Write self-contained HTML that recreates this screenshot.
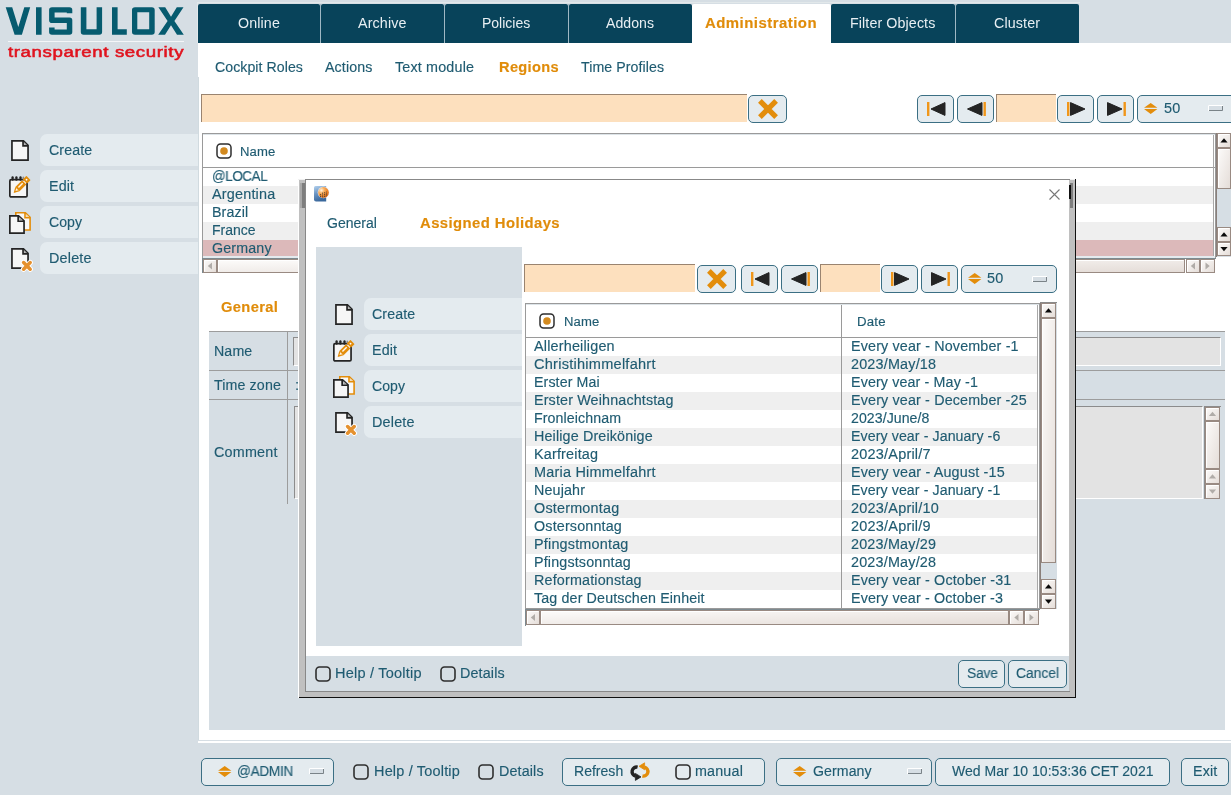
<!DOCTYPE html>
<html><head><meta charset="utf-8"><style>
html,body{margin:0;padding:0;}
body{width:1231px;height:795px;overflow:hidden;position:relative;background:#d6dee4;font-family:"Liberation Sans",sans-serif;}
div{position:absolute;}
.t{white-space:nowrap;-webkit-text-stroke:0.15px currentColor;will-change:transform;}
</style></head><body>
<svg style="position:absolute;left:0px;top:0px;" width="190" height="40" viewBox="0 0 190 40"><path d="M5.7 7.2 H12.2 L18.3 27 L24.3 7.2 H30.2 L21.9 34.8 H14.6 Z M36 7.2 H41.6 V34.8 H36 Z M52 7.2 H69.5 Q72.3 7.2 72.3 10 V13.3 H66.8 V12.5 H54.6 V17.5 H69.5 Q72.3 17.5 72.3 20.3 V32 Q72.3 34.8 69.5 34.8 H52 Q49.1 34.8 49.1 32 V27.6 H54.6 V29.5 H66.8 V23 H52 Q49.1 23 49.1 20.2 V10 Q49.1 7.2 52 7.2 Z M80.8 7.2 H86.4 V29.3 H96.6 V7.2 H102.1 V32 Q102.1 34.8 99.3 34.8 H83.6 Q80.8 34.8 80.8 32 Z M112 7.2 H117.6 V29.2 H126.8 V34.8 H112 Z M135 7.2 H151.8 Q154.7 7.2 154.7 10 V32 Q154.7 34.8 151.8 34.8 H135 Q132 34.8 132 32 V10 Q132 7.2 135 7.2 Z M137.3 12.2 V29.2 H149.2 V12.2 Z M158.4 7.2 H165.2 L171 16.8 L176.8 7.2 H183.5 L174.4 21 L183.8 34.8 H177 L171 25.2 L165 34.8 H158.2 L167.6 21 Z" fill="#065b6f" fill-rule="evenodd"/></svg>
<div style="left:8px;top:41px;width:176px;height:1px;background:#f4f6f8;"></div>
<div class="t" style="left:7.5px;top:44px;font-size:15.5px;line-height:15px;color:#e0141f;-webkit-text-stroke:0.55px #e0141f;transform:scaleX(1.205);transform-origin:0 0;letter-spacing:0.5px">transparent security</div>
<div style="left:198px;top:4px;width:122px;height:39px;background:#08435a;border-radius:2px 2px 0 0;"></div>
<div class="t" style="left:238.04px;top:16px;font-size:14.00px;line-height:14.00px;letter-spacing:0.119px;color:#e8eff3;transform:scaleX(1.0180);transform-origin:0 0;-webkit-text-stroke:0;">Online</div>
<div style="left:321px;top:4px;width:123px;height:39px;background:#08435a;border-radius:2px 2px 0 0;"></div>
<div class="t" style="left:358.19px;top:16px;font-size:14.00px;line-height:14.00px;letter-spacing:0.136px;color:#e8eff3;transform:scaleX(1.0208);transform-origin:0 0;-webkit-text-stroke:0;">Archive</div>
<div style="left:445px;top:4px;width:123px;height:39px;background:#08435a;border-radius:2px 2px 0 0;"></div>
<div class="t" style="left:482.47px;top:16px;font-size:14.00px;line-height:14.00px;letter-spacing:-0.011px;color:#e8eff3;transform:scaleX(0.9982);transform-origin:0 0;-webkit-text-stroke:0;">Policies</div>
<div style="left:569px;top:4px;width:123px;height:39px;background:#08435a;border-radius:2px 2px 0 0;"></div>
<div class="t" style="left:606.45px;top:16px;font-size:14.00px;line-height:14.00px;letter-spacing:0.052px;color:#e8eff3;transform:scaleX(1.0066);transform-origin:0 0;-webkit-text-stroke:0;">Addons</div>
<div style="left:692px;top:4px;width:139px;height:39px;background:#fff;border-radius:2px 2px 0 0;"></div>
<div class="t" style="left:705.00px;top:16px;font-size:14.00px;line-height:14.00px;letter-spacing:0.443px;color:#e08c0a;font-weight:bold;transform:scaleX(1.0669);transform-origin:0 0;">Administration</div>
<div style="left:831px;top:4px;width:124px;height:39px;background:#08435a;border-radius:2px 2px 0 0;"></div>
<div class="t" style="left:850.30px;top:16px;font-size:14.00px;line-height:14.00px;letter-spacing:0.103px;color:#e8eff3;transform:scaleX(1.0179);transform-origin:0 0;-webkit-text-stroke:0;">Filter Objects</div>
<div style="left:956px;top:4px;width:123px;height:39px;background:#08435a;border-radius:2px 2px 0 0;"></div>
<div class="t" style="left:994.44px;top:16px;font-size:14.00px;line-height:14.00px;letter-spacing:0.125px;color:#e8eff3;transform:scaleX(1.0201);transform-origin:0 0;-webkit-text-stroke:0;">Cluster</div>
<div style="left:197px;top:2px;width:883px;height:1px;background:#e2e8ea;"></div>
<div style="left:197px;top:3px;width:1px;height:40px;background:#e2e8ea;"></div>
<div style="left:320px;top:4px;width:1px;height:39px;background:#9fb8c4;"></div>
<div style="left:444px;top:4px;width:1px;height:39px;background:#9fb8c4;"></div>
<div style="left:568px;top:4px;width:1px;height:39px;background:#9fb8c4;"></div>
<div style="left:955px;top:4px;width:1px;height:39px;background:#9fb8c4;"></div>
<div style="left:199px;top:43px;width:1032px;height:697px;background:#fff;"></div>
<div style="left:198px;top:43px;width:1px;height:34px;background:#fff;"></div>
<div style="left:198px;top:77px;width:1px;height:663px;background:#d0dadf;"></div>
<div style="left:198px;top:741px;width:1033px;height:2px;background:#fff;"></div>
<div class="t" style="left:214.50px;top:60px;font-size:14.00px;line-height:14.00px;letter-spacing:0.062px;color:#1f5b71;transform:scaleX(1.0095);transform-origin:0 0;">Cockpit Roles</div>
<div class="t" style="left:324.60px;top:60px;font-size:14.00px;line-height:14.00px;letter-spacing:0.108px;color:#1f5b71;transform:scaleX(1.0168);transform-origin:0 0;">Actions</div>
<div class="t" style="left:395.00px;top:60px;font-size:14.00px;line-height:14.00px;letter-spacing:0.161px;color:#1f5b71;transform:scaleX(1.0241);transform-origin:0 0;">Text module</div>
<div class="t" style="left:498.60px;top:60px;font-size:14.00px;line-height:14.00px;letter-spacing:0.327px;color:#e08c0a;font-weight:bold;transform:scaleX(1.0432);transform-origin:0 0;">Regions</div>
<div class="t" style="left:580.60px;top:60px;font-size:14.00px;line-height:14.00px;letter-spacing:0.074px;color:#1f5b71;transform:scaleX(1.0120);transform-origin:0 0;">Time Profiles</div>
<div style="left:201px;top:94px;width:546px;height:28px;background:#fde0be;border-top:1px solid #9a8470;border-left:1px solid #9a8470;box-sizing:border-box;"></div>
<div style="left:748px;top:95px;width:39px;height:28px;background:#e4ebef;border:1.5px solid #3b6f84;border-radius:5px;box-sizing:border-box;"></div>
<svg style="position:absolute;left:758px;top:99px;" width="20" height="20" viewBox="0 0 20 20"><path d="M1.9 1.9 L18.1 18.1 M18.1 1.9 L1.9 18.1" stroke="#e38d0b" stroke-width="5.2" stroke-linecap="butt"/></svg>
<div style="left:917px;top:95px;width:37px;height:28px;background:#e4ebef;border:1.5px solid #3b6f84;border-radius:5px;box-sizing:border-box;"></div>
<svg style="position:absolute;left:927px;top:102px;" width="20" height="14" viewBox="0 0 20 14"><rect x="0" y="0" width="2.4" height="14" fill="#f0961a"/><path d="M4 7 L18 0.6 V13.4 Z" fill="#242424" stroke="#242424" stroke-width="1" stroke-linejoin="round"/></svg>
<div style="left:957px;top:95px;width:37px;height:28px;background:#e4ebef;border:1.5px solid #3b6f84;border-radius:5px;box-sizing:border-box;"></div>
<svg style="position:absolute;left:967px;top:102px;" width="20" height="14" viewBox="0 0 20 14"><path d="M0.5 7 L15 0.6 V13.4 Z" fill="#242424" stroke="#242424" stroke-width="1" stroke-linejoin="round"/><rect x="16.5" y="0" width="2.4" height="14" fill="#f0961a"/></svg>
<div style="left:996px;top:94px;width:60px;height:28px;background:#fde0be;border-top:1px solid #9a8470;border-left:1px solid #9a8470;box-sizing:border-box;"></div>
<div style="left:1057px;top:95px;width:37px;height:28px;background:#e4ebef;border:1.5px solid #3b6f84;border-radius:5px;box-sizing:border-box;"></div>
<svg style="position:absolute;left:1067px;top:102px;" width="20" height="14" viewBox="0 0 20 14"><rect x="0" y="0" width="2.4" height="14" fill="#f0961a"/><path d="M3.5 0.6 L18 7 L3.5 13.4 Z" fill="#242424" stroke="#242424" stroke-width="1" stroke-linejoin="round"/></svg>
<div style="left:1097px;top:95px;width:37px;height:28px;background:#e4ebef;border:1.5px solid #3b6f84;border-radius:5px;box-sizing:border-box;"></div>
<svg style="position:absolute;left:1107px;top:102px;" width="20" height="14" viewBox="0 0 20 14"><path d="M0.5 0.6 L15 7 L0.5 13.4 Z" fill="#242424" stroke="#242424" stroke-width="1" stroke-linejoin="round"/><rect x="16.5" y="0" width="2.4" height="14" fill="#f0961a"/></svg>
<div style="left:1137px;top:95px;width:100px;height:28px;background:#e4ebef;border:1.5px solid #3b6f84;border-radius:5px;box-sizing:border-box;"></div>
<svg style="position:absolute;left:1144px;top:103px;" width="14" height="12" viewBox="0 0 14 12"><path d="M6.7 0 L13.4 4.8 H0 Z M0 6.1 H13.4 L6.7 11 Z" fill="#e38d0b"/></svg>
<div class="t" style="left:1163.50px;top:101px;font-size:14.00px;line-height:14.00px;letter-spacing:0.233px;color:#1f5b71;transform:scaleX(1.0308);transform-origin:0 0;">50</div>
<svg style="position:absolute;left:1208px;top:105px;" width="15" height="6" viewBox="0 0 15 6"><rect x="0" y="0" width="15" height="6" fill="#d6dee4"/><path d="M0.5 6 V0.5 H15" fill="none" stroke="#fff" stroke-width="1"/><path d="M1 5.5 H14.5 V1" fill="none" stroke="#7a8388" stroke-width="1"/></svg>
<div style="left:202px;top:133px;width:1014px;height:126px;border:1px solid #9a9a9a;box-sizing:border-box;background:#fff;"></div>
<div style="left:203px;top:134px;width:1012px;height:1px;background:#dde4e8;"></div>
<svg style="position:absolute;left:216px;top:143px;" width="16" height="16" viewBox="0 0 16 16"><rect x="1" y="1" width="14" height="14" rx="3.5" fill="#fff" stroke="#2e2e2e" stroke-width="1.5"/><circle cx="8" cy="8" r="3.8" fill="#d38a1f"/></svg>
<div class="t" style="left:240.00px;top:146px;font-size:12.92px;line-height:12.92px;letter-spacing:0.115px;color:#1f5b71;transform:scaleX(1.0135);transform-origin:0 0;">Name</div>
<div style="left:203px;top:167px;width:1012px;height:1px;background:#9a9a9a;"></div>
<div style="left:1213px;top:135px;width:1px;height:121px;background:#a8a8a8;"></div>
<div class="t" style="left:211.60px;top:169px;font-size:14.00px;line-height:14.00px;letter-spacing:-0.424px;color:#1f5b71;transform:scaleX(0.9594);transform-origin:0 0;">@LOCAL</div>
<div style="left:203px;top:186px;width:1010px;height:18px;background:#efefef;"></div>
<div class="t" style="left:211.60px;top:187px;font-size:14.00px;line-height:14.00px;letter-spacing:0.187px;color:#1f5b71;transform:scaleX(1.0289);transform-origin:0 0;">Argentina</div>
<div class="t" style="left:211.60px;top:205px;font-size:14.00px;line-height:14.00px;letter-spacing:0.104px;color:#1f5b71;transform:scaleX(1.0182);transform-origin:0 0;">Brazil</div>
<div style="left:203px;top:222px;width:1010px;height:18px;background:#efefef;"></div>
<div class="t" style="left:211.60px;top:223px;font-size:14.00px;line-height:14.00px;letter-spacing:-0.029px;color:#1f5b71;transform:scaleX(0.9960);transform-origin:0 0;">France</div>
<div style="left:203px;top:240px;width:1010px;height:16px;background:#dcb9ba;"></div>
<div class="t" style="left:211.60px;top:241px;font-size:14.00px;line-height:14.00px;letter-spacing:0.152px;color:#1f5b71;transform:scaleX(1.0188);transform-origin:0 0;">Germany</div>
<div style="left:203px;top:256px;width:1012px;height:2px;background:#e4eaee;"></div>
<div style="left:1216px;top:133px;width:15px;height:124px;background:#d6dee4;"></div>
<div style="left:1216px;top:133px;width:1px;height:124px;background:#8a7f7a;"></div>
<svg style="position:absolute;left:1217px;top:133px;" width="14" height="15" viewBox="0 0 14 15"><defs><linearGradient id="g12170_1330" x1="0" y1="0" x2="1" y2="1"><stop offset="0" stop-color="#fdfcfb"/><stop offset="1" stop-color="#e4dcd7"/></linearGradient></defs><rect x="0.5" y="0.5" width="13" height="14" fill="url(#g12170_1330)" stroke="#998a82" stroke-width="1"/><path d="M1.5 13.5 V1.5 H12.5" fill="none" stroke="#fff" stroke-width="1"/><path d="M3.4 9.5 L7.0 5.3 L10.6 9.5 Z" fill="#0a0a0a"/></svg>
<svg style="position:absolute;left:1217px;top:148px;" width="14" height="41" viewBox="0 0 14 41"><defs><linearGradient id="g12170_1480" x1="0" y1="0" x2="1" y2="1"><stop offset="0" stop-color="#fdfcfb"/><stop offset="1" stop-color="#e4dcd7"/></linearGradient></defs><rect x="0.5" y="0.5" width="13" height="40" fill="url(#g12170_1480)" stroke="#998a82" stroke-width="1"/><path d="M1.5 39.5 V1.5 H12.5" fill="none" stroke="#fff" stroke-width="1"/></svg>
<svg style="position:absolute;left:1217px;top:227px;" width="14" height="15" viewBox="0 0 14 15"><defs><linearGradient id="g12170_2270" x1="0" y1="0" x2="1" y2="1"><stop offset="0" stop-color="#fdfcfb"/><stop offset="1" stop-color="#e4dcd7"/></linearGradient></defs><rect x="0.5" y="0.5" width="13" height="14" fill="url(#g12170_2270)" stroke="#998a82" stroke-width="1"/><path d="M1.5 13.5 V1.5 H12.5" fill="none" stroke="#fff" stroke-width="1"/><path d="M3.4 9.5 L7.0 5.3 L10.6 9.5 Z" fill="#0a0a0a"/></svg>
<svg style="position:absolute;left:1217px;top:242px;" width="14" height="14" viewBox="0 0 14 14"><defs><linearGradient id="g12170_2420" x1="0" y1="0" x2="1" y2="1"><stop offset="0" stop-color="#fdfcfb"/><stop offset="1" stop-color="#e4dcd7"/></linearGradient></defs><rect x="0.5" y="0.5" width="13" height="13" fill="url(#g12170_2420)" stroke="#998a82" stroke-width="1"/><path d="M1.5 12.5 V1.5 H12.5" fill="none" stroke="#fff" stroke-width="1"/><path d="M3.4 5.0 L7.0 9.2 L10.6 5.0 Z" fill="#0a0a0a"/></svg>
<div style="left:202px;top:258px;width:1014px;height:1px;background:#7d8a90;"></div>
<div style="left:202px;top:258px;width:1px;height:15px;background:#7d8a90;"></div>
<svg style="position:absolute;left:203px;top:259px;" width="14" height="14" viewBox="0 0 14 14"><defs><linearGradient id="g2030_2590" x1="0" y1="0" x2="1" y2="1"><stop offset="0" stop-color="#fdfcfb"/><stop offset="1" stop-color="#e4dcd7"/></linearGradient></defs><rect x="0.5" y="0.5" width="13" height="13" fill="url(#g2030_2590)" stroke="#998a82" stroke-width="1"/><path d="M1.5 12.5 V1.5 H12.5" fill="none" stroke="#fff" stroke-width="1"/><path d="M9.0 3.4 L4.8 7.0 L9.0 10.6 Z" fill="#b0aca8"/></svg>
<svg style="position:absolute;left:217px;top:259px;" width="968" height="14" viewBox="0 0 968 14"><defs><linearGradient id="g2170_2590" x1="0" y1="0" x2="1" y2="1"><stop offset="0" stop-color="#fdfcfb"/><stop offset="1" stop-color="#e4dcd7"/></linearGradient></defs><rect x="0.5" y="0.5" width="967" height="13" fill="url(#g2170_2590)" stroke="#998a82" stroke-width="1"/><path d="M1.5 12.5 V1.5 H966.5" fill="none" stroke="#fff" stroke-width="1"/></svg>
<svg style="position:absolute;left:1186px;top:259px;" width="14" height="14" viewBox="0 0 14 14"><defs><linearGradient id="g11860_2590" x1="0" y1="0" x2="1" y2="1"><stop offset="0" stop-color="#fdfcfb"/><stop offset="1" stop-color="#e4dcd7"/></linearGradient></defs><rect x="0.5" y="0.5" width="13" height="13" fill="url(#g11860_2590)" stroke="#998a82" stroke-width="1"/><path d="M1.5 12.5 V1.5 H12.5" fill="none" stroke="#fff" stroke-width="1"/><path d="M9.0 3.4 L4.8 7.0 L9.0 10.6 Z" fill="#b0aca8"/></svg>
<svg style="position:absolute;left:1200px;top:259px;" width="15" height="14" viewBox="0 0 15 14"><defs><linearGradient id="g12000_2590" x1="0" y1="0" x2="1" y2="1"><stop offset="0" stop-color="#fdfcfb"/><stop offset="1" stop-color="#e4dcd7"/></linearGradient></defs><rect x="0.5" y="0.5" width="14" height="13" fill="url(#g12000_2590)" stroke="#998a82" stroke-width="1"/><path d="M1.5 12.5 V1.5 H13.5" fill="none" stroke="#fff" stroke-width="1"/><path d="M5.5 3.4 L9.7 7.0 L5.5 10.6 Z" fill="#b0aca8"/></svg>
<div style="left:40px;top:134px;width:158px;height:32px;background:#e4ebef;border-radius:7px 0 0 7px;"></div>
<div class="t" style="left:48.50px;top:143px;font-size:14.00px;line-height:14.00px;letter-spacing:0.097px;color:#1f5b71;transform:scaleX(1.0141);transform-origin:0 0;">Create</div>
<div style="left:40px;top:170px;width:158px;height:32px;background:#e4ebef;border-radius:7px 0 0 7px;"></div>
<div class="t" style="left:48.50px;top:179px;font-size:14.00px;line-height:14.00px;letter-spacing:0.128px;color:#1f5b71;transform:scaleX(1.0217);transform-origin:0 0;">Edit</div>
<div style="left:40px;top:206px;width:158px;height:32px;background:#e4ebef;border-radius:7px 0 0 7px;"></div>
<div class="t" style="left:48.50px;top:215px;font-size:14.00px;line-height:14.00px;letter-spacing:0.036px;color:#1f5b71;transform:scaleX(1.0044);transform-origin:0 0;">Copy</div>
<div style="left:40px;top:242px;width:158px;height:32px;background:#e4ebef;border-radius:7px 0 0 7px;"></div>
<div class="t" style="left:48.50px;top:251px;font-size:14.00px;line-height:14.00px;letter-spacing:0.183px;color:#1f5b71;transform:scaleX(1.0278);transform-origin:0 0;">Delete</div>
<svg style="position:absolute;left:11px;top:140px;" width="19" height="22" viewBox="0 0 19 22"><path d="M0.95 0.85 H12.450000000000001 L17.05 5.449999999999999 V20.15 H0.95 Z" fill="#f6f6f6" stroke="#242424" stroke-width="1.7" stroke-linejoin="miter"/><path d="M13.250000000000002 2.05 L16.150000000000002 5.1499999999999995 H13.250000000000002 Z" fill="#a8a8a8"/><path d="M12.05 0.85 V5.85 H17.05" fill="none" stroke="#242424" stroke-width="1.7"/></svg>
<svg style="position:absolute;left:9px;top:176px;" width="24" height="23" viewBox="0 0 24 23"><rect x="0.85" y="3.65" width="17.2" height="17.3" rx="1.3" fill="#f6f6f6" stroke="#242424" stroke-width="1.7"/><rect x="2.5" y="0.2" width="2.2" height="4.6" rx="1" fill="#242424"/><rect x="6.3" y="0.2" width="2.2" height="4.6" rx="1" fill="#242424"/><rect x="10.4" y="0.2" width="2.2" height="4.6" rx="1" fill="#242424"/><rect x="13.6" y="0.6" width="1.4" height="3" rx="0.7" fill="#888"/><g transform="translate(4.6 16.9) rotate(-45)"><path d="M0 0 L5.4 -3 V3 Z" fill="#e38d0b"/><path d="M2.6 0 L5.4 -1.5 V1.5 Z" fill="#fdf3e4"/><rect x="5.4" y="-3" width="9.6" height="6" fill="#e38d0b"/><rect x="7.2" y="-1.1" width="6" height="1.5" fill="#fff6ea"/><rect x="15.9" y="-3" width="5.2" height="6" rx="0.6" fill="#e38d0b"/><circle cx="18.5" cy="-0.2" r="0.9" fill="#fff"/></g></svg>
<svg style="position:absolute;left:9px;top:211px;" width="24" height="25" viewBox="0 0 24 25"><path d="M6.8 1.8 H16.4 L21.099999999999998 6.3 V19.0 H6.8 Z" fill="#f8f8f8" stroke="#e38d0b" stroke-width="1.6" stroke-linejoin="miter"/><path d="M17.2 3.0 L20.2 6.0 H17.2 Z" fill="#f0d8b0"/><path d="M15.999999999999998 1.8 V6.7 H21.099999999999998" fill="none" stroke="#e38d0b" stroke-width="1.6"/><rect x="0" y="7" width="16" height="20" fill="none"/><path d="M0.85 4.85 H9.55 L15.05 9.85 V22.15 H0.85 Z" fill="#f6f6f6" stroke="#242424" stroke-width="1.7" stroke-linejoin="miter"/><path d="M10.350000000000001 6.05 L14.15 9.549999999999999 H10.350000000000001 Z" fill="#a8a8a8"/><path d="M9.15 4.85 V10.25 H15.05" fill="none" stroke="#242424" stroke-width="1.7"/></svg>
<svg style="position:absolute;left:11px;top:248px;" width="22" height="24" viewBox="0 0 22 24"><path d="M0.95 0.85 H12.450000000000001 L17.05 5.449999999999999 V20.15 H0.95 Z" fill="#f6f6f6" stroke="#242424" stroke-width="1.7" stroke-linejoin="miter"/><path d="M13.250000000000002 2.05 L16.150000000000002 5.1499999999999995 H13.250000000000002 Z" fill="#a8a8a8"/><path d="M12.05 0.85 V5.85 H17.05" fill="none" stroke="#242424" stroke-width="1.7"/><path d="M12.6 14.6 L19.2 21.2 M19.2 14.6 L12.6 21.2" stroke="#fff" stroke-width="5.4" stroke-linecap="round"/><path d="M12.6 14.6 L19.2 21.2 M19.2 14.6 L12.6 21.2" stroke="#e5912f" stroke-width="3.5" stroke-linecap="round"/></svg>
<div class="t" style="left:220.50px;top:300px;font-size:14.00px;line-height:14.00px;letter-spacing:0.352px;color:#e08c0a;font-weight:bold;transform:scaleX(1.0495);transform-origin:0 0;">General</div>
<div style="left:209px;top:331px;width:1016px;height:399px;background:#d6dee4;"></div>
<div style="left:209px;top:331px;width:1016px;height:1px;background:#9c9c9c;"></div>
<div style="left:209px;top:370px;width:1016px;height:1px;background:#9c9c9c;"></div>
<div style="left:209px;top:399px;width:1016px;height:1px;background:#9c9c9c;"></div>
<div style="left:287px;top:332px;width:1px;height:172px;background:#9c9c9c;"></div>
<div class="t" style="left:214.40px;top:344px;font-size:14.00px;line-height:14.00px;letter-spacing:0.123px;color:#1f5b71;transform:scaleX(1.0134);transform-origin:0 0;">Name</div>
<div class="t" style="left:214.40px;top:378px;font-size:14.00px;line-height:14.00px;letter-spacing:0.115px;color:#1f5b71;transform:scaleX(1.0162);transform-origin:0 0;">Time zone</div>
<div class="t" style="left:214.40px;top:445px;font-size:14.00px;line-height:14.00px;letter-spacing:0.209px;color:#1f5b71;transform:scaleX(1.0247);transform-origin:0 0;">Comment</div>
<div style="left:293px;top:337px;width:928px;height:29px;background:#e3e3e3;border-top:1px solid #8c8c8c;border-left:1px solid #8c8c8c;border-right:1px solid #fff;border-bottom:1px solid #fff;box-sizing:border-box;"></div>
<div class="t" style="left:295.00px;top:378px;font-size:14.00px;line-height:14.00px;letter-spacing:0.229px;color:#1f5b71;transform:scaleX(1.0624);transform-origin:0 0;">:</div>
<div style="left:294px;top:406px;width:909px;height:93px;background:#e3e3e3;border-top:1px solid #8c8c8c;border-left:1px solid #8c8c8c;border-right:1px solid #fff;border-bottom:1px solid #fff;box-sizing:border-box;"></div>
<div style="left:1204px;top:406px;width:1px;height:93px;background:#8c8c8c;"></div>
<div style="left:1204px;top:406px;width:17px;height:1px;background:#8c8c8c;"></div>
<svg style="position:absolute;left:1205px;top:407px;" width="15" height="14" viewBox="0 0 15 14"><defs><linearGradient id="g12050_4070" x1="0" y1="0" x2="1" y2="1"><stop offset="0" stop-color="#fdfcfb"/><stop offset="1" stop-color="#e4dcd7"/></linearGradient></defs><rect x="0.5" y="0.5" width="14" height="13" fill="url(#g12050_4070)" stroke="#998a82" stroke-width="1"/><path d="M1.5 12.5 V1.5 H13.5" fill="none" stroke="#fff" stroke-width="1"/><path d="M3.9 9.0 L7.5 4.8 L11.1 9.0 Z" fill="#b0aca8"/></svg>
<svg style="position:absolute;left:1205px;top:421px;" width="15" height="48" viewBox="0 0 15 48"><defs><linearGradient id="g12050_4210" x1="0" y1="0" x2="1" y2="1"><stop offset="0" stop-color="#fdfcfb"/><stop offset="1" stop-color="#e4dcd7"/></linearGradient></defs><rect x="0.5" y="0.5" width="14" height="47" fill="url(#g12050_4210)" stroke="#998a82" stroke-width="1"/><path d="M1.5 46.5 V1.5 H13.5" fill="none" stroke="#fff" stroke-width="1"/></svg>
<svg style="position:absolute;left:1205px;top:469px;" width="15" height="15" viewBox="0 0 15 15"><defs><linearGradient id="g12050_4690" x1="0" y1="0" x2="1" y2="1"><stop offset="0" stop-color="#fdfcfb"/><stop offset="1" stop-color="#e4dcd7"/></linearGradient></defs><rect x="0.5" y="0.5" width="14" height="14" fill="url(#g12050_4690)" stroke="#998a82" stroke-width="1"/><path d="M1.5 13.5 V1.5 H13.5" fill="none" stroke="#fff" stroke-width="1"/><path d="M3.9 9.5 L7.5 5.3 L11.1 9.5 Z" fill="#b0aca8"/></svg>
<svg style="position:absolute;left:1205px;top:484px;" width="15" height="15" viewBox="0 0 15 15"><defs><linearGradient id="g12050_4840" x1="0" y1="0" x2="1" y2="1"><stop offset="0" stop-color="#fdfcfb"/><stop offset="1" stop-color="#e4dcd7"/></linearGradient></defs><rect x="0.5" y="0.5" width="14" height="14" fill="url(#g12050_4840)" stroke="#998a82" stroke-width="1"/><path d="M1.5 13.5 V1.5 H13.5" fill="none" stroke="#fff" stroke-width="1"/><path d="M3.9 5.5 L7.5 9.7 L11.1 5.5 Z" fill="#b0aca8"/></svg>
<div style="left:201px;top:758px;width:133px;height:28px;background:#e4ebef;border:1.5px solid #3b6f84;border-radius:5px;box-sizing:border-box;"></div>
<svg style="position:absolute;left:218px;top:766px;" width="14" height="12" viewBox="0 0 14 12"><path d="M6.7 0 L13.4 4.8 H0 Z M0 6.1 H13.4 L6.7 11 Z" fill="#e38d0b"/></svg>
<div class="t" style="left:237.40px;top:764px;font-size:14.00px;line-height:14.00px;letter-spacing:-0.285px;color:#1f5b71;transform:scaleX(0.9720);transform-origin:0 0;">@ADMIN</div>
<svg style="position:absolute;left:309px;top:768px;" width="15" height="6" viewBox="0 0 15 6"><rect x="0" y="0" width="15" height="6" fill="#d6dee4"/><path d="M0.5 6 V0.5 H15" fill="none" stroke="#fff" stroke-width="1"/><path d="M1 5.5 H14.5 V1" fill="none" stroke="#7a8388" stroke-width="1"/></svg>
<svg style="position:absolute;left:352.5px;top:763.5px;" width="16" height="16" viewBox="0 0 16 16"><rect x="1" y="1" width="14" height="14" rx="3.5" fill="none" stroke="#2e2e2e" stroke-width="1.6"/></svg>
<div class="t" style="left:373.60px;top:764px;font-size:14.00px;line-height:14.00px;letter-spacing:0.184px;color:#1f5b71;transform:scaleX(1.0330);transform-origin:0 0;">Help / Tooltip</div>
<svg style="position:absolute;left:477.5px;top:763.5px;" width="16" height="16" viewBox="0 0 16 16"><rect x="1" y="1" width="14" height="14" rx="3.5" fill="none" stroke="#2e2e2e" stroke-width="1.6"/></svg>
<div class="t" style="left:498.70px;top:764px;font-size:14.00px;line-height:14.00px;letter-spacing:0.133px;color:#1f5b71;transform:scaleX(1.0223);transform-origin:0 0;">Details</div>
<div style="left:562px;top:758px;width:203px;height:28px;background:#e4ebef;border:1.5px solid #3b6f84;border-radius:5px;box-sizing:border-box;"></div>
<div class="t" style="left:574.30px;top:764px;font-size:14.00px;line-height:14.00px;letter-spacing:0.013px;color:#1f5b71;transform:scaleX(1.0019);transform-origin:0 0;">Refresh</div>
<svg style="position:absolute;left:628px;top:762px;" width="24" height="20" viewBox="0 0 24 20"><path d="M9.6 5.2 A4.5 4.5 0 1 0 7.6 14" fill="none" stroke="#242424" stroke-width="3.4"/><path d="M7.4 11.4 L13 14.9 L7.4 18.4 Z" fill="#242424" stroke="#242424" stroke-width="0.8" stroke-linejoin="round"/><g transform="rotate(180 12 9.6)"><path d="M9.6 5.2 A4.5 4.5 0 1 0 7.6 14" fill="none" stroke="#e38d0b" stroke-width="3.4"/><path d="M7.4 11.4 L13 14.9 L7.4 18.4 Z" fill="#e38d0b" stroke="#e38d0b" stroke-width="0.8" stroke-linejoin="round"/></g></svg>
<svg style="position:absolute;left:674.5px;top:763.5px;" width="16" height="16" viewBox="0 0 16 16"><rect x="1" y="1" width="14" height="14" rx="3.5" fill="none" stroke="#2e2e2e" stroke-width="1.6"/></svg>
<div class="t" style="left:695.30px;top:764px;font-size:14.00px;line-height:14.00px;letter-spacing:0.170px;color:#1f5b71;transform:scaleX(1.0227);transform-origin:0 0;">manual</div>
<div style="left:776px;top:758px;width:156px;height:28px;background:#e4ebef;border:1.5px solid #3b6f84;border-radius:5px;box-sizing:border-box;"></div>
<svg style="position:absolute;left:793px;top:766px;" width="14" height="12" viewBox="0 0 14 12"><path d="M6.7 0 L13.4 4.8 H0 Z M0 6.1 H13.4 L6.7 11 Z" fill="#e38d0b"/></svg>
<div class="t" style="left:812.60px;top:764px;font-size:14.00px;line-height:14.00px;letter-spacing:0.080px;color:#1f5b71;transform:scaleX(1.0098);transform-origin:0 0;">Germany</div>
<svg style="position:absolute;left:907px;top:768px;" width="15" height="6" viewBox="0 0 15 6"><rect x="0" y="0" width="15" height="6" fill="#d6dee4"/><path d="M0.5 6 V0.5 H15" fill="none" stroke="#fff" stroke-width="1"/><path d="M1 5.5 H14.5 V1" fill="none" stroke="#7a8388" stroke-width="1"/></svg>
<div style="left:935px;top:758px;width:235px;height:28px;background:#e4ebef;border:1.5px solid #3b6f84;border-radius:5px;box-sizing:border-box;"></div>
<div class="t" style="left:952.00px;top:764px;font-size:14.00px;line-height:14.00px;letter-spacing:0.008px;color:#1f5b71;transform:scaleX(1.0012);transform-origin:0 0;">Wed Mar 10 10:53:36 CET 2021</div>
<div style="left:1181px;top:758px;width:48px;height:28px;background:#e4ebef;border:1.5px solid #3b6f84;border-radius:5px;box-sizing:border-box;"></div>
<div class="t" style="left:1193.30px;top:764px;font-size:14.00px;line-height:14.00px;letter-spacing:0.130px;color:#1f5b71;transform:scaleX(1.0227);transform-origin:0 0;">Exit</div>
<div style="left:299px;top:179px;width:777px;height:519px;background:#c0c0c0;"></div>
<div style="left:298px;top:179px;width:1px;height:519px;background:#fff;"></div>
<div style="left:298px;top:179px;width:778px;height:1px;background:#f0f0f0;"></div>
<div style="left:1075px;top:179px;width:1px;height:519px;background:#111;"></div>
<div style="left:299px;top:697px;width:777px;height:1px;background:#111;"></div>
<div style="left:305px;top:179px;width:1px;height:512px;background:#888;"></div>
<div style="left:305px;top:179px;width:765px;height:1px;background:#888;"></div>
<div style="left:300px;top:183px;width:2px;height:25px;background:#a8a8a8;"></div>
<div style="left:302px;top:183px;width:3px;height:25px;background:#7e7e7e;"></div>
<div style="left:1070px;top:183px;width:3px;height:25px;background:#7e7e7e;"></div>
<div style="left:1069px;top:185px;width:2px;height:14px;background:#111;"></div>
<div style="left:306px;top:180px;width:763px;height:511px;background:#fff;"></div>
<svg style="position:absolute;left:313px;top:185px;" width="18" height="18" viewBox="0 0 18 18"><defs><linearGradient id="dib" x1="0" y1="0" x2="0.3" y2="1"><stop offset="0" stop-color="#b4d2ee"/><stop offset="0.5" stop-color="#6b94c2"/><stop offset="1" stop-color="#3a689c"/></linearGradient><radialGradient id="dio" cx="0.3" cy="0.3" r="0.8"><stop offset="0" stop-color="#fff4e0"/><stop offset="0.35" stop-color="#f9b060"/><stop offset="0.8" stop-color="#ea7a1c"/><stop offset="1" stop-color="#c85a10"/></radialGradient></defs><path d="M1 2.5 Q1 1 2.5 1 H13.2 V16.6 H3 Q1 16.6 1 14.6 Z" fill="url(#dib)"/><circle cx="10.5" cy="7.4" r="5.9" fill="#e8f0f8" opacity="0.8"/><circle cx="10.5" cy="7.4" r="5.3" fill="url(#dio)"/><path d="M7.6 12 V8.5 M9.6 12.4 V7.5 M11.6 12 V7 M13.4 10.5 V6.5" stroke="#4a3a30" stroke-width="0.9" stroke-dasharray="1.2 0.6"/></svg>
<svg style="position:absolute;left:1049px;top:189px;" width="11" height="11" viewBox="0 0 11 11"><path d="M0.5 0.5 L10.5 10.5 M10.5 0.5 L0.5 10.5" stroke="#777" stroke-width="1.1"/></svg>
<div class="t" style="left:327.00px;top:216px;font-size:14.00px;line-height:14.00px;letter-spacing:0.014px;color:#1f5b71;transform:scaleX(1.0020);transform-origin:0 0;">General</div>
<div class="t" style="left:419.70px;top:216px;font-size:14.00px;line-height:14.00px;letter-spacing:0.410px;color:#e08c0a;font-weight:bold;transform:scaleX(1.0589);transform-origin:0 0;">Assigned Holidays</div>
<div style="left:316px;top:247px;width:206px;height:399px;background:#d6dee4;"></div>
<div style="left:364px;top:298px;width:158px;height:32px;background:#e4ebef;border-radius:7px 0 0 7px;"></div>
<div class="t" style="left:372.40px;top:307px;font-size:14.00px;line-height:14.00px;letter-spacing:0.097px;color:#1f5b71;transform:scaleX(1.0141);transform-origin:0 0;">Create</div>
<div style="left:364px;top:334px;width:158px;height:32px;background:#e4ebef;border-radius:7px 0 0 7px;"></div>
<div class="t" style="left:372.40px;top:343px;font-size:14.00px;line-height:14.00px;letter-spacing:0.128px;color:#1f5b71;transform:scaleX(1.0217);transform-origin:0 0;">Edit</div>
<div style="left:364px;top:370px;width:158px;height:32px;background:#e4ebef;border-radius:7px 0 0 7px;"></div>
<div class="t" style="left:372.40px;top:379px;font-size:14.00px;line-height:14.00px;letter-spacing:0.036px;color:#1f5b71;transform:scaleX(1.0044);transform-origin:0 0;">Copy</div>
<div style="left:364px;top:406px;width:158px;height:32px;background:#e4ebef;border-radius:7px 0 0 7px;"></div>
<div class="t" style="left:372.40px;top:415px;font-size:14.00px;line-height:14.00px;letter-spacing:0.183px;color:#1f5b71;transform:scaleX(1.0278);transform-origin:0 0;">Delete</div>
<svg style="position:absolute;left:335px;top:304px;" width="19" height="22" viewBox="0 0 19 22"><path d="M0.95 0.85 H12.450000000000001 L17.05 5.449999999999999 V20.15 H0.95 Z" fill="#f6f6f6" stroke="#242424" stroke-width="1.7" stroke-linejoin="miter"/><path d="M13.250000000000002 2.05 L16.150000000000002 5.1499999999999995 H13.250000000000002 Z" fill="#a8a8a8"/><path d="M12.05 0.85 V5.85 H17.05" fill="none" stroke="#242424" stroke-width="1.7"/></svg>
<svg style="position:absolute;left:333px;top:340px;" width="24" height="23" viewBox="0 0 24 23"><rect x="0.85" y="3.65" width="17.2" height="17.3" rx="1.3" fill="#f6f6f6" stroke="#242424" stroke-width="1.7"/><rect x="2.5" y="0.2" width="2.2" height="4.6" rx="1" fill="#242424"/><rect x="6.3" y="0.2" width="2.2" height="4.6" rx="1" fill="#242424"/><rect x="10.4" y="0.2" width="2.2" height="4.6" rx="1" fill="#242424"/><rect x="13.6" y="0.6" width="1.4" height="3" rx="0.7" fill="#888"/><g transform="translate(4.6 16.9) rotate(-45)"><path d="M0 0 L5.4 -3 V3 Z" fill="#e38d0b"/><path d="M2.6 0 L5.4 -1.5 V1.5 Z" fill="#fdf3e4"/><rect x="5.4" y="-3" width="9.6" height="6" fill="#e38d0b"/><rect x="7.2" y="-1.1" width="6" height="1.5" fill="#fff6ea"/><rect x="15.9" y="-3" width="5.2" height="6" rx="0.6" fill="#e38d0b"/><circle cx="18.5" cy="-0.2" r="0.9" fill="#fff"/></g></svg>
<svg style="position:absolute;left:333px;top:375px;" width="24" height="25" viewBox="0 0 24 25"><path d="M6.8 1.8 H16.4 L21.099999999999998 6.3 V19.0 H6.8 Z" fill="#f8f8f8" stroke="#e38d0b" stroke-width="1.6" stroke-linejoin="miter"/><path d="M17.2 3.0 L20.2 6.0 H17.2 Z" fill="#f0d8b0"/><path d="M15.999999999999998 1.8 V6.7 H21.099999999999998" fill="none" stroke="#e38d0b" stroke-width="1.6"/><rect x="0" y="7" width="16" height="20" fill="none"/><path d="M0.85 4.85 H9.55 L15.05 9.85 V22.15 H0.85 Z" fill="#f6f6f6" stroke="#242424" stroke-width="1.7" stroke-linejoin="miter"/><path d="M10.350000000000001 6.05 L14.15 9.549999999999999 H10.350000000000001 Z" fill="#a8a8a8"/><path d="M9.15 4.85 V10.25 H15.05" fill="none" stroke="#242424" stroke-width="1.7"/></svg>
<svg style="position:absolute;left:335px;top:412px;" width="22" height="24" viewBox="0 0 22 24"><path d="M0.95 0.85 H12.450000000000001 L17.05 5.449999999999999 V20.15 H0.95 Z" fill="#f6f6f6" stroke="#242424" stroke-width="1.7" stroke-linejoin="miter"/><path d="M13.250000000000002 2.05 L16.150000000000002 5.1499999999999995 H13.250000000000002 Z" fill="#a8a8a8"/><path d="M12.05 0.85 V5.85 H17.05" fill="none" stroke="#242424" stroke-width="1.7"/><path d="M12.6 14.6 L19.2 21.2 M19.2 14.6 L12.6 21.2" stroke="#fff" stroke-width="5.4" stroke-linecap="round"/><path d="M12.6 14.6 L19.2 21.2 M19.2 14.6 L12.6 21.2" stroke="#e5912f" stroke-width="3.5" stroke-linecap="round"/></svg>
<div style="left:524px;top:264px;width:171px;height:28px;background:#fde0be;border-top:1px solid #9a8470;border-left:1px solid #9a8470;box-sizing:border-box;"></div>
<div style="left:697px;top:265px;width:39px;height:28px;background:#e4ebef;border:1.5px solid #3b6f84;border-radius:5px;box-sizing:border-box;"></div>
<svg style="position:absolute;left:707px;top:269px;" width="20" height="20" viewBox="0 0 20 20"><path d="M1.9 1.9 L18.1 18.1 M18.1 1.9 L1.9 18.1" stroke="#e38d0b" stroke-width="5.2" stroke-linecap="butt"/></svg>
<div style="left:741px;top:264.5px;width:37px;height:28px;background:#e4ebef;border:1.5px solid #3b6f84;border-radius:5px;box-sizing:border-box;"></div>
<svg style="position:absolute;left:751px;top:272px;" width="20" height="14" viewBox="0 0 20 14"><rect x="0" y="0" width="2.4" height="14" fill="#f0961a"/><path d="M4 7 L18 0.6 V13.4 Z" fill="#242424" stroke="#242424" stroke-width="1" stroke-linejoin="round"/></svg>
<div style="left:781px;top:264.5px;width:37px;height:28px;background:#e4ebef;border:1.5px solid #3b6f84;border-radius:5px;box-sizing:border-box;"></div>
<svg style="position:absolute;left:791px;top:272px;" width="20" height="14" viewBox="0 0 20 14"><path d="M0.5 7 L15 0.6 V13.4 Z" fill="#242424" stroke="#242424" stroke-width="1" stroke-linejoin="round"/><rect x="16.5" y="0" width="2.4" height="14" fill="#f0961a"/></svg>
<div style="left:820px;top:264px;width:60px;height:28px;background:#fde0be;border-top:1px solid #9a8470;border-left:1px solid #9a8470;box-sizing:border-box;"></div>
<div style="left:881px;top:264.5px;width:37px;height:28px;background:#e4ebef;border:1.5px solid #3b6f84;border-radius:5px;box-sizing:border-box;"></div>
<svg style="position:absolute;left:891px;top:272px;" width="20" height="14" viewBox="0 0 20 14"><rect x="0" y="0" width="2.4" height="14" fill="#f0961a"/><path d="M3.5 0.6 L18 7 L3.5 13.4 Z" fill="#242424" stroke="#242424" stroke-width="1" stroke-linejoin="round"/></svg>
<div style="left:921px;top:264.5px;width:37px;height:28px;background:#e4ebef;border:1.5px solid #3b6f84;border-radius:5px;box-sizing:border-box;"></div>
<svg style="position:absolute;left:931px;top:272px;" width="20" height="14" viewBox="0 0 20 14"><path d="M0.5 0.6 L15 7 L0.5 13.4 Z" fill="#242424" stroke="#242424" stroke-width="1" stroke-linejoin="round"/><rect x="16.5" y="0" width="2.4" height="14" fill="#f0961a"/></svg>
<div style="left:961px;top:264.5px;width:96px;height:28px;background:#e4ebef;border:1.5px solid #3b6f84;border-radius:5px;box-sizing:border-box;"></div>
<svg style="position:absolute;left:968px;top:272.5px;" width="14" height="12" viewBox="0 0 14 12"><path d="M6.7 0 L13.4 4.8 H0 Z M0 6.1 H13.4 L6.7 11 Z" fill="#e38d0b"/></svg>
<div class="t" style="left:987.40px;top:271px;font-size:14.00px;line-height:14.00px;letter-spacing:0.233px;color:#1f5b71;transform:scaleX(1.0308);transform-origin:0 0;">50</div>
<svg style="position:absolute;left:1032px;top:275.5px;" width="15" height="6" viewBox="0 0 15 6"><rect x="0" y="0" width="15" height="6" fill="#d6dee4"/><path d="M0.5 6 V0.5 H15" fill="none" stroke="#fff" stroke-width="1"/><path d="M1 5.5 H14.5 V1" fill="none" stroke="#7a8388" stroke-width="1"/></svg>
<div style="left:525px;top:303px;width:515px;height:306px;border:1px solid #9a9a9a;box-sizing:border-box;background:#fff;"></div>
<div style="left:526px;top:304px;width:513px;height:1px;background:#dde4e8;"></div>
<svg style="position:absolute;left:538.5px;top:312.5px;" width="16" height="16" viewBox="0 0 16 16"><rect x="1" y="1" width="14" height="14" rx="3.5" fill="#fff" stroke="#2e2e2e" stroke-width="1.5"/><circle cx="8" cy="8" r="3.8" fill="#d38a1f"/></svg>
<div class="t" style="left:563.50px;top:316px;font-size:12.92px;line-height:12.92px;letter-spacing:0.115px;color:#1f5b71;transform:scaleX(1.0135);transform-origin:0 0;">Name</div>
<div class="t" style="left:856.80px;top:316px;font-size:12.92px;line-height:12.92px;letter-spacing:0.171px;color:#1f5b71;transform:scaleX(1.0257);transform-origin:0 0;">Date</div>
<div style="left:526px;top:337px;width:512px;height:1px;background:#9a9a9a;"></div>
<div style="left:841px;top:305px;width:1px;height:303px;background:#9a9a9a;"></div>
<div style="left:1037px;top:305px;width:1px;height:303px;background:#a8a8a8;"></div>
<div class="t" style="left:534.30px;top:339px;font-size:14.00px;line-height:14.00px;letter-spacing:0.168px;color:#1f5b71;transform:scaleX(1.0295);transform-origin:0 0;">Allerheiligen</div>
<div class="t" style="left:850.90px;top:339px;font-size:14.00px;line-height:14.00px;letter-spacing:0.151px;color:#1f5b71;transform:scaleX(1.0232);transform-origin:0 0;">Every vear - November -1</div>
<div style="left:526px;top:356px;width:315px;height:18px;background:#efefef;"></div>
<div style="left:842px;top:356px;width:195px;height:18px;background:#efefef;"></div>
<div class="t" style="left:534.30px;top:357px;font-size:14.00px;line-height:14.00px;letter-spacing:0.238px;color:#1f5b71;transform:scaleX(1.0396);transform-origin:0 0;">Christihimmelfahrt</div>
<div class="t" style="left:850.90px;top:357px;font-size:14.00px;line-height:14.00px;letter-spacing:0.190px;color:#1f5b71;transform:scaleX(1.0264);transform-origin:0 0;">2023/May/18</div>
<div class="t" style="left:534.30px;top:375px;font-size:14.00px;line-height:14.00px;letter-spacing:0.094px;color:#1f5b71;transform:scaleX(1.0149);transform-origin:0 0;">Erster Mai</div>
<div class="t" style="left:850.90px;top:375px;font-size:14.00px;line-height:14.00px;letter-spacing:0.124px;color:#1f5b71;transform:scaleX(1.0197);transform-origin:0 0;">Every vear - May -1</div>
<div style="left:526px;top:392px;width:315px;height:18px;background:#efefef;"></div>
<div style="left:842px;top:392px;width:195px;height:18px;background:#efefef;"></div>
<div class="t" style="left:534.30px;top:393px;font-size:14.00px;line-height:14.00px;letter-spacing:0.147px;color:#1f5b71;transform:scaleX(1.0225);transform-origin:0 0;">Erster Weihnachtstag</div>
<div class="t" style="left:850.90px;top:393px;font-size:14.00px;line-height:14.00px;letter-spacing:0.151px;color:#1f5b71;transform:scaleX(1.0229);transform-origin:0 0;">Every vear - December -25</div>
<div class="t" style="left:534.30px;top:411px;font-size:14.00px;line-height:14.00px;letter-spacing:0.100px;color:#1f5b71;transform:scaleX(1.0143);transform-origin:0 0;">Fronleichnam</div>
<div class="t" style="left:850.90px;top:411px;font-size:14.00px;line-height:14.00px;letter-spacing:0.059px;color:#1f5b71;transform:scaleX(1.0085);transform-origin:0 0;">2023/June/8</div>
<div style="left:526px;top:428px;width:315px;height:18px;background:#efefef;"></div>
<div style="left:842px;top:428px;width:195px;height:18px;background:#efefef;"></div>
<div class="t" style="left:534.30px;top:429px;font-size:14.00px;line-height:14.00px;letter-spacing:0.141px;color:#1f5b71;transform:scaleX(1.0228);transform-origin:0 0;">Heilige Dreikönige</div>
<div class="t" style="left:850.90px;top:429px;font-size:14.00px;line-height:14.00px;letter-spacing:0.083px;color:#1f5b71;transform:scaleX(1.0133);transform-origin:0 0;">Every vear - January -6</div>
<div class="t" style="left:534.30px;top:447px;font-size:14.00px;line-height:14.00px;letter-spacing:0.169px;color:#1f5b71;transform:scaleX(1.0287);transform-origin:0 0;">Karfreitag</div>
<div class="t" style="left:850.90px;top:447px;font-size:14.00px;line-height:14.00px;letter-spacing:0.204px;color:#1f5b71;transform:scaleX(1.0339);transform-origin:0 0;">2023/April/7</div>
<div style="left:526px;top:464px;width:315px;height:18px;background:#efefef;"></div>
<div style="left:842px;top:464px;width:195px;height:18px;background:#efefef;"></div>
<div class="t" style="left:534.30px;top:465px;font-size:14.00px;line-height:14.00px;letter-spacing:0.211px;color:#1f5b71;transform:scaleX(1.0324);transform-origin:0 0;">Maria Himmelfahrt</div>
<div class="t" style="left:850.90px;top:465px;font-size:14.00px;line-height:14.00px;letter-spacing:0.160px;color:#1f5b71;transform:scaleX(1.0257);transform-origin:0 0;">Every vear - August -15</div>
<div class="t" style="left:534.30px;top:483px;font-size:14.00px;line-height:14.00px;letter-spacing:0.146px;color:#1f5b71;transform:scaleX(1.0213);transform-origin:0 0;">Neujahr</div>
<div class="t" style="left:850.90px;top:483px;font-size:14.00px;line-height:14.00px;letter-spacing:0.083px;color:#1f5b71;transform:scaleX(1.0133);transform-origin:0 0;">Every vear - January -1</div>
<div style="left:526px;top:500px;width:315px;height:18px;background:#efefef;"></div>
<div style="left:842px;top:500px;width:195px;height:18px;background:#efefef;"></div>
<div class="t" style="left:534.30px;top:501px;font-size:14.00px;line-height:14.00px;letter-spacing:0.196px;color:#1f5b71;transform:scaleX(1.0274);transform-origin:0 0;">Ostermontag</div>
<div class="t" style="left:850.90px;top:501px;font-size:14.00px;line-height:14.00px;letter-spacing:0.207px;color:#1f5b71;transform:scaleX(1.0336);transform-origin:0 0;">2023/April/10</div>
<div class="t" style="left:534.30px;top:519px;font-size:14.00px;line-height:14.00px;letter-spacing:0.159px;color:#1f5b71;transform:scaleX(1.0232);transform-origin:0 0;">Ostersonntag</div>
<div class="t" style="left:850.90px;top:519px;font-size:14.00px;line-height:14.00px;letter-spacing:0.204px;color:#1f5b71;transform:scaleX(1.0339);transform-origin:0 0;">2023/April/9</div>
<div style="left:526px;top:536px;width:315px;height:18px;background:#efefef;"></div>
<div style="left:842px;top:536px;width:195px;height:18px;background:#efefef;"></div>
<div class="t" style="left:534.30px;top:537px;font-size:14.00px;line-height:14.00px;letter-spacing:0.189px;color:#1f5b71;transform:scaleX(1.0282);transform-origin:0 0;">Pfingstmontag</div>
<div class="t" style="left:850.90px;top:537px;font-size:14.00px;line-height:14.00px;letter-spacing:0.190px;color:#1f5b71;transform:scaleX(1.0264);transform-origin:0 0;">2023/May/29</div>
<div class="t" style="left:534.30px;top:555px;font-size:14.00px;line-height:14.00px;letter-spacing:0.149px;color:#1f5b71;transform:scaleX(1.0230);transform-origin:0 0;">Pfingstsonntag</div>
<div class="t" style="left:850.90px;top:555px;font-size:14.00px;line-height:14.00px;letter-spacing:0.190px;color:#1f5b71;transform:scaleX(1.0264);transform-origin:0 0;">2023/May/28</div>
<div style="left:526px;top:572px;width:315px;height:18px;background:#efefef;"></div>
<div style="left:842px;top:572px;width:195px;height:18px;background:#efefef;"></div>
<div class="t" style="left:534.30px;top:573px;font-size:14.00px;line-height:14.00px;letter-spacing:0.162px;color:#1f5b71;transform:scaleX(1.0242);transform-origin:0 0;">Reformationstag</div>
<div class="t" style="left:850.90px;top:573px;font-size:14.00px;line-height:14.00px;letter-spacing:0.144px;color:#1f5b71;transform:scaleX(1.0231);transform-origin:0 0;">Every vear - October -31</div>
<div class="t" style="left:534.30px;top:591px;font-size:14.00px;line-height:14.00px;letter-spacing:0.127px;color:#1f5b71;transform:scaleX(1.0197);transform-origin:0 0;">Tag der Deutschen Einheit</div>
<div class="t" style="left:850.90px;top:591px;font-size:14.00px;line-height:14.00px;letter-spacing:0.141px;color:#1f5b71;transform:scaleX(1.0227);transform-origin:0 0;">Every vear - October -3</div>
<div style="left:1040px;top:302px;width:17px;height:307px;background:#d6dee4;"></div>
<div style="left:1040px;top:302px;width:1px;height:307px;background:#8a7f7a;"></div>
<div style="left:1040px;top:302px;width:17px;height:1px;background:#8a8a8a;"></div>
<svg style="position:absolute;left:1041px;top:303px;" width="15" height="15" viewBox="0 0 15 15"><defs><linearGradient id="g10410_3030" x1="0" y1="0" x2="1" y2="1"><stop offset="0" stop-color="#fdfcfb"/><stop offset="1" stop-color="#e4dcd7"/></linearGradient></defs><rect x="0.5" y="0.5" width="14" height="14" fill="url(#g10410_3030)" stroke="#998a82" stroke-width="1"/><path d="M1.5 13.5 V1.5 H13.5" fill="none" stroke="#fff" stroke-width="1"/><path d="M3.9 9.5 L7.5 5.3 L11.1 9.5 Z" fill="#0a0a0a"/></svg>
<svg style="position:absolute;left:1041px;top:318px;" width="15" height="245" viewBox="0 0 15 245"><defs><linearGradient id="g10410_3180" x1="0" y1="0" x2="1" y2="1"><stop offset="0" stop-color="#fdfcfb"/><stop offset="1" stop-color="#e4dcd7"/></linearGradient></defs><rect x="0.5" y="0.5" width="14" height="244" fill="url(#g10410_3180)" stroke="#998a82" stroke-width="1"/><path d="M1.5 243.5 V1.5 H13.5" fill="none" stroke="#fff" stroke-width="1"/></svg>
<svg style="position:absolute;left:1041px;top:579px;" width="15" height="15" viewBox="0 0 15 15"><defs><linearGradient id="g10410_5790" x1="0" y1="0" x2="1" y2="1"><stop offset="0" stop-color="#fdfcfb"/><stop offset="1" stop-color="#e4dcd7"/></linearGradient></defs><rect x="0.5" y="0.5" width="14" height="14" fill="url(#g10410_5790)" stroke="#998a82" stroke-width="1"/><path d="M1.5 13.5 V1.5 H13.5" fill="none" stroke="#fff" stroke-width="1"/><path d="M3.9 9.5 L7.5 5.3 L11.1 9.5 Z" fill="#0a0a0a"/></svg>
<svg style="position:absolute;left:1041px;top:594px;" width="15" height="15" viewBox="0 0 15 15"><defs><linearGradient id="g10410_5940" x1="0" y1="0" x2="1" y2="1"><stop offset="0" stop-color="#fdfcfb"/><stop offset="1" stop-color="#e4dcd7"/></linearGradient></defs><rect x="0.5" y="0.5" width="14" height="14" fill="url(#g10410_5940)" stroke="#998a82" stroke-width="1"/><path d="M1.5 13.5 V1.5 H13.5" fill="none" stroke="#fff" stroke-width="1"/><path d="M3.9 5.5 L7.5 9.7 L11.1 5.5 Z" fill="#0a0a0a"/></svg>
<div style="left:525px;top:609px;width:515px;height:1px;background:#7d8a90;"></div>
<div style="left:525px;top:609px;width:1px;height:17px;background:#7d8a90;"></div>
<svg style="position:absolute;left:526px;top:610px;" width="14" height="15" viewBox="0 0 14 15"><defs><linearGradient id="g5260_6100" x1="0" y1="0" x2="1" y2="1"><stop offset="0" stop-color="#fdfcfb"/><stop offset="1" stop-color="#e4dcd7"/></linearGradient></defs><rect x="0.5" y="0.5" width="13" height="14" fill="url(#g5260_6100)" stroke="#998a82" stroke-width="1"/><path d="M1.5 13.5 V1.5 H12.5" fill="none" stroke="#fff" stroke-width="1"/><path d="M9.0 3.9 L4.8 7.5 L9.0 11.1 Z" fill="#b0aca8"/></svg>
<svg style="position:absolute;left:540px;top:610px;" width="469" height="15" viewBox="0 0 469 15"><defs><linearGradient id="g5400_6100" x1="0" y1="0" x2="1" y2="1"><stop offset="0" stop-color="#fdfcfb"/><stop offset="1" stop-color="#e4dcd7"/></linearGradient></defs><rect x="0.5" y="0.5" width="468" height="14" fill="url(#g5400_6100)" stroke="#998a82" stroke-width="1"/><path d="M1.5 13.5 V1.5 H467.5" fill="none" stroke="#fff" stroke-width="1"/></svg>
<svg style="position:absolute;left:1009px;top:610px;" width="15" height="15" viewBox="0 0 15 15"><defs><linearGradient id="g10090_6100" x1="0" y1="0" x2="1" y2="1"><stop offset="0" stop-color="#fdfcfb"/><stop offset="1" stop-color="#e4dcd7"/></linearGradient></defs><rect x="0.5" y="0.5" width="14" height="14" fill="url(#g10090_6100)" stroke="#998a82" stroke-width="1"/><path d="M1.5 13.5 V1.5 H13.5" fill="none" stroke="#fff" stroke-width="1"/><path d="M9.5 3.9 L5.3 7.5 L9.5 11.1 Z" fill="#b0aca8"/></svg>
<svg style="position:absolute;left:1024px;top:610px;" width="15" height="15" viewBox="0 0 15 15"><defs><linearGradient id="g10240_6100" x1="0" y1="0" x2="1" y2="1"><stop offset="0" stop-color="#fdfcfb"/><stop offset="1" stop-color="#e4dcd7"/></linearGradient></defs><rect x="0.5" y="0.5" width="14" height="14" fill="url(#g10240_6100)" stroke="#998a82" stroke-width="1"/><path d="M1.5 13.5 V1.5 H13.5" fill="none" stroke="#fff" stroke-width="1"/><path d="M5.5 3.9 L9.7 7.5 L5.5 11.1 Z" fill="#b0aca8"/></svg>
<div style="left:306px;top:656px;width:763px;height:35px;background:#d6dee4;"></div>
<div style="left:305px;top:691px;width:765px;height:1px;background:#888;"></div>
<svg style="position:absolute;left:315px;top:665.5px;" width="16" height="16" viewBox="0 0 16 16"><rect x="1" y="1" width="14" height="14" rx="3.5" fill="none" stroke="#2e2e2e" stroke-width="1.6"/></svg>
<div class="t" style="left:335.30px;top:666px;font-size:14.00px;line-height:14.00px;letter-spacing:0.208px;color:#1f5b71;transform:scaleX(1.0374);transform-origin:0 0;">Help / Tooltip</div>
<svg style="position:absolute;left:440px;top:665.5px;" width="16" height="16" viewBox="0 0 16 16"><rect x="1" y="1" width="14" height="14" rx="3.5" fill="none" stroke="#2e2e2e" stroke-width="1.6"/></svg>
<div class="t" style="left:460.40px;top:666px;font-size:14.00px;line-height:14.00px;letter-spacing:0.140px;color:#1f5b71;transform:scaleX(1.0235);transform-origin:0 0;">Details</div>
<div style="left:958px;top:660px;width:47px;height:28px;background:#e4ebef;border:1.5px solid #3b6f84;border-radius:5px;box-sizing:border-box;"></div>
<div class="t" style="left:966.70px;top:666px;font-size:14.00px;line-height:14.00px;letter-spacing:-0.154px;color:#1f5b71;transform:scaleX(0.9811);transform-origin:0 0;">Save</div>
<div style="left:1008px;top:660px;width:59px;height:28px;background:#e4ebef;border:1.5px solid #3b6f84;border-radius:5px;box-sizing:border-box;"></div>
<div class="t" style="left:1016.40px;top:666px;font-size:14.00px;line-height:14.00px;letter-spacing:-0.065px;color:#1f5b71;transform:scaleX(0.9911);transform-origin:0 0;">Cancel</div>
</body></html>
